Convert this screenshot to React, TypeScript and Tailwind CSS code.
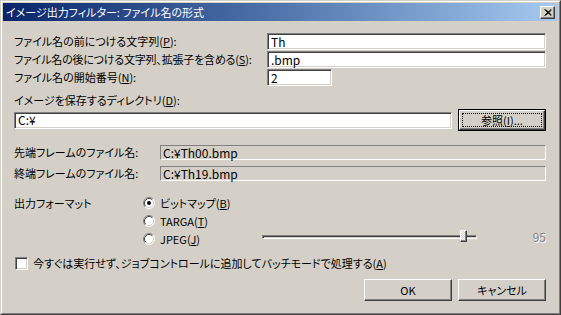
import React from 'react';

const FONT = "font-['Noto_Sans_CJK_JP','Noto_Sans_CJK_SC',sans-serif] [font-feature-settings:'palt'] text-[11px] text-black whitespace-nowrap";

const Edit = ({ className, value }: { className: string; value?: string }) => (
  <div
    className={`h-[17px] bg-white border border-t-[#808080] border-l-[#808080] border-r-white border-b-white shadow-[inset_1px_1px_0_#404040,inset_-1px_-1px_0_#d4d0c8] pl-[3px] flex items-center leading-none text-[12px] ${className}`}
  >
    {value}
  </div>
);

const ReadOnly = ({ value }: { value: string }) => (
  <div className="flex-1 h-[15px] border border-t-[#808080] border-l-[#808080] border-r-white border-b-white pl-[2px] flex items-center leading-none text-[12px]">
    {value}
  </div>
);

const Radio = ({ checked }: { checked?: boolean }) => (
  <svg width="12" height="12" viewBox="0 0 12 12" className="shrink-0">
    <circle cx="6" cy="6" r="5" fill="#ffffff" />
    <path d="M2.11 9.89 A5.5 5.5 0 0 1 9.89 2.11" stroke="#808080" strokeWidth="1" fill="none" />
    <path d="M9.89 2.11 A5.5 5.5 0 0 1 2.11 9.89" stroke="#ffffff" strokeWidth="1" fill="none" />
    <path d="M2.82 9.18 A4.5 4.5 0 0 1 9.18 2.82" stroke="#404040" strokeWidth="1" fill="none" />
    <path d="M9.18 2.82 A4.5 4.5 0 0 1 2.82 9.18" stroke="#d4d0c8" strokeWidth="1" fill="none" />
    {checked && <circle cx="6" cy="6" r="2" fill="#000000" />}
  </svg>
);

const Button = ({ children }: { children: React.ReactNode }) => (
  <div className="w-[88px] h-[22px] bg-[#d4d0c8] border border-t-white border-l-white border-r-[#404040] border-b-[#404040] shadow-[inset_-1px_-1px_0_#808080] flex items-center justify-center leading-none">
    {children}
  </div>
);

export default function App() {
  return (
    <div className={`w-[561px] h-[315px] bg-[#d4d0c8] border border-t-[#d4d0c8] border-l-[#d4d0c8] border-r-[#404040] border-b-[#404040] ${FONT}`}>
      <div className="h-full border border-t-white border-l-white border-r-[#808080] border-b-[#808080] p-px flex flex-col">
        {/* title bar */}
        <div className="h-[18px] bg-gradient-to-r from-[#0a246a] to-[#a6caf0] flex items-center pl-[3px] pr-[3px]">
          <span className="text-white leading-none flex-1">イメージ出力フィルター: ファイル名の形式</span>
          <div className="w-[15px] h-[13px] bg-[#d4d0c8] border border-t-white border-l-white border-r-[#404040] border-b-[#404040] shadow-[inset_-1px_-1px_0_#808080] flex items-center justify-center">
            <svg width="8" height="7" viewBox="0 0 8 7">
              <path d="M0.5 0.5 L7 6.5 M1.5 0.5 L7.5 6 M7 0.5 L0.5 6.5 M7.5 1 L1.5 6.5" stroke="#000" strokeWidth="1" />
            </svg>
          </div>
        </div>

        <div className="flex-1 flex flex-col pl-[11px] pr-[12px] pt-[12px]">
          <div className="flex h-[17px] items-center">
            <div className="w-[253px] leading-none">ファイル名の前につける文字列(<u>P</u>):</div>
            <Edit className="flex-1" value="Th" />
          </div>
          <div className="flex h-[17px] items-center mt-px">
            <div className="w-[253px] leading-none tracking-[-0.2px]">ファイル名の後につける文字列、拡張子を含める(<u>S</u>):</div>
            <Edit className="flex-1" value=".bmp" />
          </div>
          <div className="flex h-[17px] items-center mt-px">
            <div className="w-[253px] leading-none">ファイル名の開始番号(<u>N</u>):</div>
            <Edit className="w-[65px]" value="2" />
          </div>

          <div className="mt-[7px] h-[14px] leading-[14px]">イメージを保存するディレクトリ(<u>D</u>):</div>
          <div className="mt-[2px] h-[22px] flex items-center gap-[6px]">
            <Edit className="flex-1" value="C:¥" />
            <div className="w-[88px] h-[22px] border border-black">
              <div className="h-full bg-[#d4d0c8] border border-t-white border-l-white border-r-[#404040] border-b-[#404040] shadow-[inset_-1px_-1px_0_#808080] p-[2px] flex">
                <div className="flex-1 border border-dotted border-black flex items-center justify-center leading-none">
                  参照(<u>I</u>)...
                </div>
              </div>
            </div>
          </div>

          <div className="mt-[14px] flex items-center h-[15px]">
            <div className="w-[146px] leading-none">先端フレームのファイル名:</div>
            <ReadOnly value="C:¥Th00.bmp" />
          </div>
          <div className="mt-[6px] flex items-center h-[15px]">
            <div className="w-[146px] leading-none">終端フレームのファイル名:</div>
            <ReadOnly value="C:¥Th19.bmp" />
          </div>

          <div className="mt-[13px] flex">
            <div className="w-[129px] h-[18px] flex items-center leading-none">出力フォーマット</div>
            <div className="flex-1 flex flex-col">
              <div className="h-[18px] flex items-center gap-[5px] leading-none">
                <Radio checked />
                <span>ビットマップ(<u>B</u>)</span>
              </div>
              <div className="h-[18px] flex items-center gap-[5px] leading-none">
                <Radio />
                <span>TARGA(<u>T</u>)</span>
              </div>
              <div className="h-[18px] flex items-center leading-none">
                <div className="w-[119px] flex items-center gap-[5px]">
                  <Radio />
                  <span>JPEG(<u>J</u>)</span>
                </div>
                <div className="w-[215px] h-[4px] mb-[4px] relative border border-t-[#808080] border-l-[#808080] border-r-white border-b-white shadow-[inset_1px_1px_0_#404040]">
                  <div className="absolute left-[197px] top-[-6px] w-[7px] h-[12px] bg-[repeating-conic-gradient(#ffffff_0_25%,#d4d0c8_0_50%)] bg-[length:2px_2px] border border-t-white border-l-white border-r-[#404040] border-b-[#404040] shadow-[inset_-1px_-1px_0_#808080]" />
                </div>
                <div className="flex-1 text-right mb-[4px] text-[12px] text-[#808080] [text-shadow:1px_1px_0_#ffffff]">95</div>
              </div>
            </div>
          </div>

          <div className="mt-[8px] h-[14px] flex items-center gap-[5px] leading-none">
            <div className="ml-px w-[13px] h-[13px] bg-white border border-t-[#808080] border-l-[#808080] border-r-white border-b-white shadow-[inset_1px_1px_0_#404040,inset_-1px_-1px_0_#d4d0c8]" />
            <span>今すぐは実行せず、ジョブコントロールに追加してバッチモードで処理する(<u>A</u>)</span>
          </div>

          <div className="mt-[9px] flex justify-end gap-[6px]">
            <Button>OK</Button>
            <Button>キャンセル</Button>
          </div>
        </div>
      </div>
    </div>
  );
}
